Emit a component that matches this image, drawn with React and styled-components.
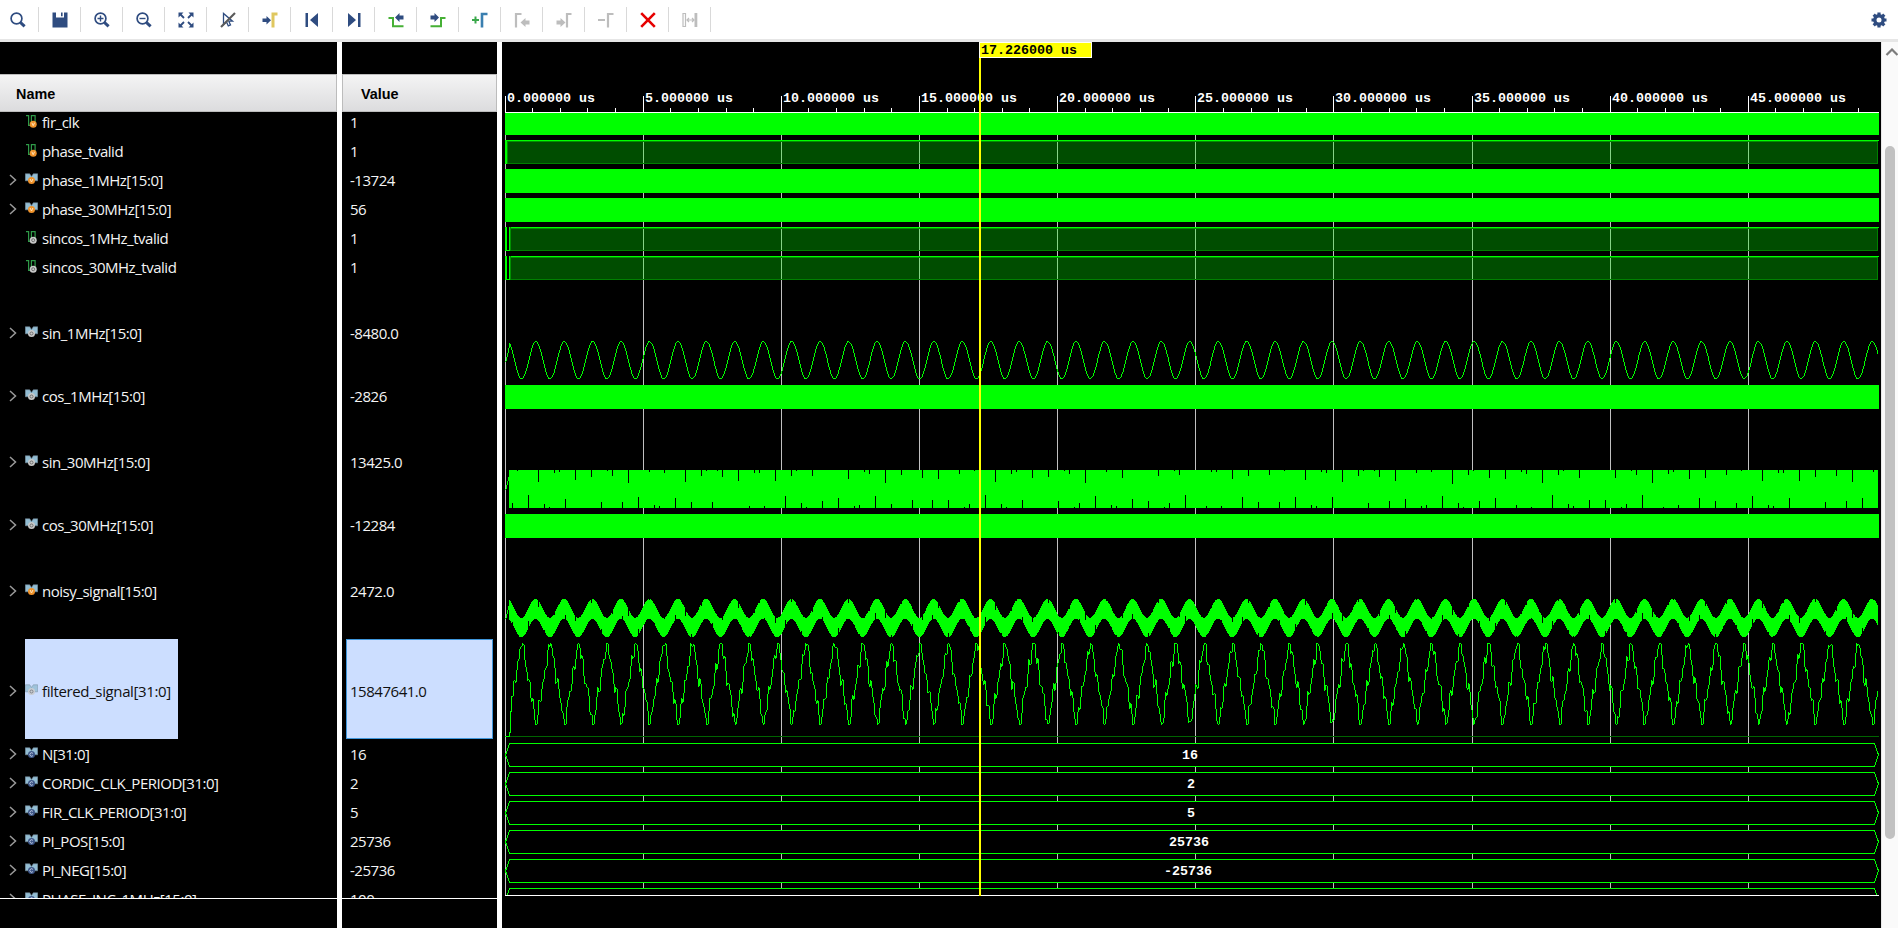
import React from "react";
import styled, { createGlobalStyle, css } from "styled-components";

const NAVY = "#2f4c80";
const GREEN = "#00ff00";
const GREY = "#bdbdbd";

const GlobalStyle = createGlobalStyle`
  * { box-sizing: border-box; }
  html, body, #root { height: 100%; }
  body { margin: 0; overflow: hidden; background: #000; font-family: "Open Sans", "Noto Sans", sans-serif; }
`;

const Window = styled.div`
  display: flex;
  flex-direction: column;
  width: 1898px;
  height: 928px;
  background: #fff;
`;

const Toolbar = styled.header`
  display: flex;
  align-items: center;
  height: 42px;
  flex: none;
  background: #fff;
  border-bottom: 3px solid #e6e6e6;
`;

const ToolButton = styled.button`
  display: flex;
  align-items: center;
  justify-content: center;
  width: ${(p) => p.$width || 42}px;
  height: 25px;
  padding: 0 ${(p) => (p.$first ? 3 : 0)}px 0 0;
  border: 0;
  border-right: ${(p) => (p.$last ? "0" : "1px solid #d9d9d9")};
  margin-left: ${(p) => (p.$last ? "auto" : "0")};
  background: none;
`;

const Body = styled.main`
  display: flex;
  flex: 1;
  min-height: 0;
`;

const Pane = styled.section`
  display: flex;
  flex-direction: column;
  width: ${(p) => p.$width}px;
  margin-right: 5px;
  padding-top: 32px;
  background: #000;
`;

const PaneHeader = styled.div`
  display: flex;
  align-items: center;
  height: 38px;
  flex: none;
  padding: 1px 0 0 ${(p) => p.$indent}px;
  border: 1px solid #bcbcbc;
  border-left: ${(p) => (p.$indent > 16 ? "1px solid #bcbcbc" : "0")};
  background: linear-gradient(#f4f4f4, #dcdcde);
  color: #000;
  font: bold 14.4px "Liberation Sans", Arial, sans-serif;
`;

const PaneList = styled.div`
  height: 787px;
  flex: none;
  overflow: hidden;
  border-bottom: 1px solid #fff;
`;

const Rows = styled.div`
  margin-top: -5px;
`;

const rowText = css`
  color: #f4f4f4;
  font-size: 15px;
  letter-spacing: -0.47px;
  white-space: pre;
`;

const Row = styled.div`
  display: flex;
  align-items: center;
  height: ${(p) => p.$height}px;
  ${rowText}
  & > * { padding-top: ${(p) => (p.$height > 29 ? 3 : 0)}px; }
`;

const Expander = styled.span`
  display: flex;
  width: 25px;
  padding-left: 9px;
  flex: none;
`;

const NameCell = styled.div`
  display: flex;
  align-items: center;
  gap: 4px;
  height: 100%;
  padding-right: 7px;
  background: ${(p) => (p.$selected ? "#ccdeff" : "transparent")};
  color: ${(p) => (p.$selected ? "#101010" : "inherit")};
`;

const SignalName = styled.span`
  width: ${(p) => (p.$width ? p.$width + "px" : "auto")};
  letter-spacing: ${(p) => (p.$width ? "-0.37px" : "inherit")};
`;

const ValueCell = styled.div`
  display: flex;
  align-items: center;
  flex: 1;
  height: 100%;
  margin: 0 4px;
  padding-left: 3px;
  border: 1px solid ${(p) => (p.$selected ? "#3f97dc" : "transparent")};
  background: ${(p) => (p.$selected ? "#ccdeff" : "transparent")};
  color: ${(p) => (p.$selected ? "#101010" : "inherit")};
`;

const Scrollbar = styled.div`
  display: flex;
  flex-direction: column;
  align-items: center;
  width: 17px;
  padding: 6px 0 0 3px;
  background: #fafafa;
  border-left: 1px solid #e8e8e8;
`;

const ScrollThumb = styled.div`
  width: 10px;
  height: 693px;
  margin: 90px 3px 0 0;
  border-radius: 5px;
  background: #c1c1c1;
`;

const Wave = styled.svg`
  display: block;
  flex: none;
  background: #000;
  shape-rendering: crispEdges;
  text {
    font: bold 13.33px "Liberation Mono", "Courier New", monospace;
    white-space: pre;
  }
`;

/* ---------- toolbar icons, each on a 16x16 grid ---------- */

const Glyph = ({ children }) => (
  <svg width="16" height="16" viewBox="0 0 16 16" fill="none">
    {children}
  </svg>
);

const Lens = ({ children }) => (
  <>
    <circle cx="6.5" cy="6.5" r="5.4" stroke={NAVY} strokeWidth="1.7" />
    <path d="M10.6 10.6L14.6 14.3" stroke={NAVY} strokeWidth="3" />
    {children}
  </>
);

const ICONS = [
  <Lens key="find" />,
  <path key="save" fill={NAVY} d="M.5 .5H4v5h8v-5h3.5v15H.5zM9 .5h1.6v3.7H9z" />,
  <Lens key="in"><path d="M3.5 6.5h6M6.5 3.5v6" stroke={NAVY} strokeWidth="1.4" /></Lens>,
  <Lens key="out"><path d="M3.5 6.5h6" stroke={NAVY} strokeWidth="1.4" /></Lens>,
  <g key="fit">
    <path fill={NAVY} d="M.5 .5h5L.5 5.5zM15.5 .5v5l-5-5zM.5 15.5v-5l5 5zM15.5 15.5h-5l5-5z" />
    <path stroke={NAVY} strokeWidth="1.8" d="M2 2l4 4M14 2l-4 4M2 14l4-4M14 14l-4-4" />
  </g>,
  <g key="pointer">
    <path stroke={NAVY} strokeWidth="1.3" d="M3.5 1.5v11l3-2.6 1.8 4 2.2-1-1.7-3.7h3.7z" />
    <path stroke="#5a5a5a" strokeWidth="2.2" d="M1 15L15 1" />
  </g>,
  <g key="cursor">
    <path fill={NAVY} d="M.5 6.5h4V4l4.5 4.2-4.5 4.2V10h-4z" />
    <path stroke="#dfc75f" strokeWidth="3" d="M15.5 2H11v13.5" />
  </g>,
  <path key="first" fill={NAVY} d="M1.5 1H4v14H1.5zM14 1v14L6 8z" />,
  <path key="last" fill={NAVY} d="M14.5 1H12v14h2.5zM2 1v14l8-7z" />,
  <g key="prev">
    <path stroke="#46b035" strokeWidth="2" d="M.5 6H5v8.2h10.5" />
    <path fill={NAVY} d="M15.5 3.5v4h-4V10L7 5.5 11.5 1v2.5z" />
  </g>,
  <g key="next">
    <path stroke="#46b035" strokeWidth="2" d="M.5 14.2H11V6h4.5" />
    <path fill={NAVY} d="M.5 3.5v4h4V10L9 5.5 4.5 1v2.5z" />
  </g>,
  <g key="add">
    <path stroke="#3aa84a" strokeWidth="2" d="M0 8h7M3.5 4.5v7" />
    <path stroke="#3a7fb0" strokeWidth="2.6" d="M15.5 2H10v13.5" />
  </g>,
  <g key="prevMarker">
    <path stroke={GREY} strokeWidth="2.2" d="M7.5 2H2v13.5" />
    <path fill={GREY} d="M15.5 8.5v4h-4V15L6.5 10.5 11.5 6v2.5z" />
  </g>,
  <g key="nextMarker">
    <path stroke={GREY} strokeWidth="2.2" d="M15.5 2H11v13.5" />
    <path fill={GREY} d="M.5 8.5v4h4V15L9.5 10.5 4.5 6v2.5z" />
  </g>,
  <g key="remove">
    <path stroke={GREY} strokeWidth="2.2" d="M0 8h7M15.5 2H10v13.5" />
  </g>,
  <path key="delete" stroke="#e60000" strokeWidth="2.6" d="M1.2 1.2L14.8 14.8M14.8 1.2L1.2 14.8" />,
  <g key="swap">
    <path stroke={GREY} strokeWidth="1.2" d="M1 1.5h2.5v13H1zM5 8h6.5M7 6L5 8l2 2M10 6l2 2-2 2" />
    <path fill={GREY} d="M12.5 1h2.8v14h-2.8z" />
  </g>,
];

const Gear = () => (
  <Glyph>
    <circle cx="8" cy="8" r="4.2" stroke={NAVY} strokeWidth="3.4" />
    <g stroke={NAVY} strokeWidth="3.2">
      <path d="M8 .5v3M8 12.5v3M.5 8h3M12.5 8h3M2.7 2.7l2 2M11.3 11.3l2 2M2.7 13.3l2-2M11.3 4.7l2-2" />
    </g>
  </Glyph>
);

/* ---------- signal icons ---------- */

const BADGES = {
  var: ["#f0932b", "#ffe2b8"],
  net: ["#c9c9c9", "#6e6e6e"],
  const: ["#3d5687", "#c9d4ea"],
};

const Badge = ({ kind, cx, cy }) => {
  const [fill, ink] = BADGES[kind];
  return (
    <>
      <circle cx={cx} cy={cy} r="3.5" fill={fill} />
      {kind === "var" && <path d={`M${cx - 1.4} ${cy - 1.5}l1.4 3 1.4-3`} stroke={ink} />}
      {kind === "net" && <circle cx={cx} cy={cy} r="1.5" stroke={ink} />}
      {kind === "const" && <path d={`M${cx + 1.3} ${cy - 1.2}a1.7 1.7 0 1 0 0 2.4`} stroke={ink} />}
    </>
  );
};

const SignalIcon = ({ bus, kind, faded }) => (
  <svg width="13" height="13" viewBox="0 0 13 13" fill="none" opacity={faded ? 0.8 : 1}>
    {bus ? (
      <path fill="#93bdd3" stroke="#6f8593" strokeWidth=".6" d="M.3 .8h4.4l1.8 2.7L8.3 .8h4.4v7H.3z" />
    ) : (
      <path stroke="#2f9a48" strokeWidth="1.2" d="M1 .7h2.6v9.8h2.8V.7h3.7V7" />
    )}
    <Badge kind={kind} cx={bus ? 6.5 : 8.2} cy={bus ? 7.5 : 9.2} />
  </svg>
);

const Chevron = () => (
  <svg width="8" height="12" viewBox="0 0 8 12" fill="none">
    <path d="M1 1l5.5 5L1 11" stroke="#9a9a9a" strokeWidth="1.5" />
  </svg>
);

/* ---------- data ---------- */

const SIGNALS = [
  { name: "fir_clk", value: "1", kind: "var" },
  { name: "phase_tvalid", value: "1", kind: "var" },
  { name: "phase_1MHz[15:0]", value: "-13724", kind: "var", bus: true },
  { name: "phase_30MHz[15:0]", value: "56", kind: "var", bus: true },
  { name: "sincos_1MHz_tvalid", value: "1", kind: "net" },
  { name: "sincos_30MHz_tvalid", value: "1", kind: "net" },
  { name: "sin_1MHz[15:0]", value: "-8480.0", kind: "net", bus: true, h: 100 },
  { name: "cos_1MHz[15:0]", value: "-2826", kind: "net", bus: true },
  { name: "sin_30MHz[15:0]", value: "13425.0", kind: "net", bus: true, h: 100 },
  { name: "cos_30MHz[15:0]", value: "-12284", kind: "net", bus: true },
  { name: "noisy_signal[15:0]", value: "2472.0", kind: "var", bus: true, h: 100 },
  { name: "filtered_signal[31:0]", value: "15847641.0", kind: "net", bus: true, h: 100, selected: true, w: 129 },
  { name: "N[31:0]", value: "16", kind: "const", bus: true },
  { name: "CORDIC_CLK_PERIOD[31:0]", value: "2", kind: "const", bus: true },
  { name: "FIR_CLK_PERIOD[31:0]", value: "5", kind: "const", bus: true },
  { name: "PI_POS[15:0]", value: "25736", kind: "const", bus: true },
  { name: "PI_NEG[15:0]", value: "-25736", kind: "const", bus: true },
  { name: "PHASE_INC_1MHz[15:0]", value: "100", kind: "const", bus: true },
];

/* ---------- wave geometry ---------- */

const X0 = 505;
const X1 = 1879;
const STEP = 138.15;
const PERIOD = 28.435;

const MAJORS = Array.from({ length: 10 }, (_, i) => ({
  x: Math.floor(X0 + STEP * i),
  label: `${i * 5}.000000 us`,
}));
const MINORS = Array.from({ length: 50 }, (_, i) => Math.floor(X0 + (STEP / 5) * i)).filter((x) => x < X1);

const bar = (x, top, bottom) => `M${x} ${top}h1V${bottom}h-1z`;

/* one-pixel columns that join each sample to the next */
const trace = (from, to, fn) => {
  let d = "";
  let prev = Math.round(fn(from));
  for (let x = from; x < to; x++) {
    const y = Math.round(fn(x));
    const lo = y > prev ? prev + 1 : y;
    const hi = y < prev ? prev - 1 : y;
    d += bar(x, Math.min(lo, hi), Math.max(lo, hi) + 1);
    prev = y;
  }
  return d;
};

const cosAt = (x) => Math.cos((2 * Math.PI * (x - 535.1)) / PERIOD);
const sine = (x) => (x < 509 ? 361 - (x - 505) * 4.2 : 359.7 - 18.7 * cosAt(x));

/* x position and depth pairs of the gaps in the aliased 30 MHz wave */
const pairs = (origin, list) => list.map(([x, d]) => [Math.floor(origin + x / 3), d]);
const TOP_GAPS = [
  ...pairs(490, [[82, 1], [145, 12], [193, 3], [208, 2], [256, 10], [304, 7], [352, 1], [367, 6], [415, 13], [478, 2], [523, 3], [586, 12], [634, 6], [649, 1], [682, 1], [697, 7], [745, 11], [793, 3], [808, 3], [856, 11], [904, 6], [919, 1], [967, 6], [1075, 9], [1123, 2], [1138, 4], [1186, 13], [1234, 5], [1297, 8]]),
  ...pairs(930, [[25, 9], [88, 4], [133, 1], [196, 12], [244, 4], [259, 2], [307, 8], [355, 7], [403, 1], [418, 4], [466, 13], [529, 2], [577, 8], [685, 6], [733, 1], [748, 5], [844, 2], [859, 2], [907, 9], [955, 6], [1018, 5], [1063, 1]]),
  ...pairs(1285, [[61, 10], [109, 2], [124, 3], [172, 12], [220, 6], [235, 1], [268, 1], [283, 7], [331, 11], [394, 3], [439, 2], [502, 14], [550, 5], [565, 1], [613, 8], [661, 9], [709, 2], [724, 4], [772, 13], [820, 5], [835, 1], [883, 8], [991, 8], [1039, 1], [1054, 5], [1102, 13], [1150, 4], [1165, 2], [1213, 9], [1261, 8], [1324, 5], [1369, 1], [1432, 11], [1480, 3], [1495, 3], [1543, 11], [1591, 7], [1654, 6], [1702, 12], [1765, 2]]),
];
const BOTTOM_GAPS = [
  ...pairs(490, [[67, 5], [115, 13], [163, 4], [178, 1], [226, 9], [334, 6], [397, 6], [445, 11], [493, 3], [508, 2], [556, 10], [604, 6], [667, 6], [778, 2], [823, 2], [886, 12], [934, 5], [949, 1], [997, 7], [1045, 10], [1093, 2], [1108, 3], [1156, 12], [1204, 4], [1267, 8]]),
  ...pairs(930, [[7, 8], [55, 8], [103, 1], [118, 4], [166, 13], [214, 4], [229, 1], [277, 8], [385, 7], [433, 1], [448, 5], [496, 12], [544, 3], [559, 2], [607, 9], [655, 7], [703, 1], [718, 5], [766, 13], [829, 2], [874, 2], [937, 11], [985, 6], [1048, 6]]),
  ...pairs(1285, [[31, 11], [79, 3], [94, 2], [142, 11], [250, 5], [313, 7], [361, 9], [409, 2], [424, 3], [472, 12], [520, 5], [535, 1], [583, 7], [631, 10], [694, 3], [739, 1], [802, 13], [850, 4], [865, 2], [913, 8], [961, 8], [1009, 1], [1024, 4], [1072, 13], [1135, 1], [1180, 3], [1243, 10], [1291, 7], [1354, 5], [1402, 12], [1450, 3], [1465, 2], [1513, 10], [1621, 6], [1684, 7], [1732, 10]]),
];
const topGap = new Map(TOP_GAPS);
const bottomGap = new Map(BOTTOM_GAPS);

const column = (fnTop, fnBottom) => {
  let d = "";
  for (let x = 509; x < X1 - 1; x++) d += bar(x, fnTop(x), fnBottom(x));
  return d;
};

const SIN30 = column((x) => 470 + (topGap.get(x) || 0), (x) => 508 - (bottomGap.get(x) || 0));
const NOISY = column(
  (x) => Math.round(608.3 - 9.5 * cosAt(x) + (topGap.get(x) || 0) * 0.5),
  (x) => Math.round(628 - 9.3 * cosAt(x) - (bottomGap.get(x) || 0) * 0.5)
);

/* average cycle of the filter output: distance from the peak and height */
const CYCLE = [[0, 638], [1.3, 646], [2.6, 656], [4, 664], [6.2, 681], [8.2, 686], [10.2, 699], [12.2, 712], [14.2, 730], [16, 714], [18, 699], [20, 689], [21.8, 681], [23.6, 666], [25.4, 659], [27, 648], [28.5, 638]];
const filtered = (x) => {
  const p = (((x - 521.1) % PERIOD) + PERIOD) % PERIOD;
  let i = 1;
  while (i < CYCLE.length - 1 && CYCLE[i][0] < p) i++;
  const [ax, ay] = CYCLE[i - 1];
  const [bx, by] = CYCLE[i];
  const base = ay + ((by - ay) * (p - ax)) / (bx - ax);
  const ripple = 4.2 * Math.sin((2 * Math.PI * x) / 4.9) + 3.4 * Math.sin((2 * Math.PI * x) / 3.1 + 1);
  return Math.max(643, Math.min(724, base + ripple));
};
const FILTERED =
  bar(509, 732, 737) + bar(510, 711, 733) + bar(511, 696, 712) + trace(512, X1 - 1, filtered);

const BUSES = [
  { y: 743, text: "16", x: 1182 },
  { y: 772, text: "2", x: 1187 },
  { y: 801, text: "5", x: 1187 },
  { y: 830, text: "25736", x: 1169 },
  { y: 859, text: "-25736", x: 1164 },
  { y: 888 },
];

const SolidTrack = ({ y }) => <rect x={X0} y={y} width={X1 - X0} height="24" fill={GREEN} />;

const HighTrack = ({ y, rise }) => (
  <g>
    <rect x={rise} y={y} width={X1 - rise} height="24" fill={GREEN} fillOpacity=".3" />
    <rect x={rise} y={y + 23} width={X1 - rise} height="1" fill="#008000" />
    <rect x={X1 - 2} y={y + 1} width="1" height="23" fill="#008000" />
    <rect x={X1 - 1} y={y + 1} width="1" height="23" fill="#000" />
    <rect x={rise} y={y} width={X1 - rise} height="1" fill={GREEN} />
    <rect x={rise + 1} y={y + 1} width={X1 - rise - 2} height="1" fill="#009000" />
    <rect x={X0} y={y} width="2" height="24" fill={GREEN} />
    {rise > 507 ? (
      <>
        <rect x={X0} y={y + 23} width="5" height="1" fill={GREEN} />
        <rect x={rise} y={y} width="1" height="24" fill={GREEN} />
        <rect x={rise + 1} y={y} width="1" height="24" fill="#009000" />
      </>
    ) : (
      <rect x="507" y={y + 1} width="1" height="23" fill="#009000" />
    )}
  </g>
);

const BusTrack = ({ y, x, text }) => (
  <g>
    <path
      d={`M509.5 ${y + 0.5}H${X1 - 4.5}L${X1 - 0.5} ${y + 12}L${X1 - 4.5} ${y + 23.5}H509.5L505.5 ${y + 12}z`}
      fill="#000"
      stroke={GREEN}
    />
    {text && <text x={x} y={y + 16} fill="#fff">{text}</text>}
  </g>
);

const WaveView = () => (
  <Wave width="1379" height="886" viewBox="502 42 1379 886">
    <defs>
      <clipPath id="tracks"><rect x={X0} y="113" width={X1 - X0} height="782" /></clipPath>
    </defs>
    {MAJORS.map((m) => (
      <g key={m.x}>
        <rect x={m.x} y="113" width="1" height="782" fill="#c0c0c0" />
        <rect x={m.x} y="96" width="1" height="16" fill="#fff" />
        <text x={m.x + 2} y="102" fill="#fff">{m.label}</text>
      </g>
    ))}
    {MINORS.map((x) => <rect key={x} x={x} y="108" width="1" height="4" fill="#fff" />)}
    <rect x={X0} y="112" width={X1 - X0} height="1" fill="#fff" />
    <g clipPath="url(#tracks)">
      <SolidTrack y={111} />
      <HighTrack y={140} rise={507} />
      <SolidTrack y={169} />
      <SolidTrack y={198} />
      <HighTrack y={227} rise={509} />
      <HighTrack y={256} rise={509} />
      <path d={trace(X0, X1 - 1, sine)} fill={GREEN} />
      <SolidTrack y={385} />
      <path d={trace(X0, 509, (x) => 489 - (x - 505) * 4)} fill={GREEN} />
      <path d={SIN30} fill={GREEN} />
      <SolidTrack y={514} />
      <path d={trace(X0, 509, (x) => 618 - (x - 505) * 4)} fill={GREEN} />
      <path d={NOISY} fill={GREEN} />
      <rect x={X0} y="736" width={X1 - X0} height="1" fill="#006400" />
      <rect x={X0} y="736" width="5" height="1" fill={GREEN} />
      <path d={FILTERED} fill={GREEN} />
      {BUSES.map((b) => <BusTrack key={b.y} {...b} />)}
    </g>
    <rect x={X0} y="895" width={X1 - X0} height="1" fill="#fff" />
    <rect x="979" y="43" width="2" height="853" fill="#ffff00" />
    <rect x="979.5" y="42.5" width="112" height="15" fill="#ffff00" stroke="#fffff0" />
    <text x="981" y="54" fill="#000">17.226000 us</text>
  </Wave>
);

export default function App() {
  return (
    <Window>
      <GlobalStyle />
      <Toolbar>
        {ICONS.map((icon, i) => (
          <ToolButton key={icon.key} $first={i === 0} $width={i === 0 ? 39 : 42}>
            <Glyph>{icon}</Glyph>
          </ToolButton>
        ))}
        <ToolButton $last $width={39}><Gear /></ToolButton>
      </Toolbar>
      <Body>
        <Pane $width={337}>
          <PaneHeader $indent={16}>Name</PaneHeader>
          <PaneList>
            <Rows>
              {SIGNALS.map((s) => (
                <Row key={s.name} $height={s.h || 29}>
                  <Expander>{s.bus && <Chevron />}</Expander>
                  <NameCell $selected={s.selected}>
                    <SignalIcon bus={s.bus} kind={s.kind} faded={s.selected} />
                    <SignalName $width={s.w}>{s.name}</SignalName>
                  </NameCell>
                </Row>
              ))}
            </Rows>
          </PaneList>
        </Pane>
        <Pane $width={155}>
          <PaneHeader $indent={18}>Value</PaneHeader>
          <PaneList>
            <Rows>
              {SIGNALS.map((s) => (
                <Row key={s.name} $height={s.h || 29}>
                  <ValueCell $selected={s.selected}>{s.value}</ValueCell>
                </Row>
              ))}
            </Rows>
          </PaneList>
        </Pane>
        <WaveView />
        <Scrollbar>
          <svg width="14" height="8" viewBox="0 0 14 8" fill="none">
            <path d="M1.5 7L7 1.5 12.5 7" stroke="#7c7c7c" strokeWidth="2.2" />
          </svg>
          <ScrollThumb />
        </Scrollbar>
      </Body>
    </Window>
  );
}
